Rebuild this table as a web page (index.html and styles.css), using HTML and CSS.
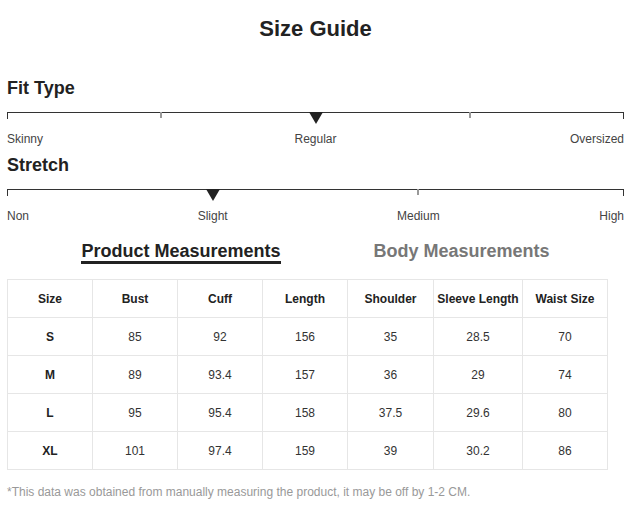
FILE: index.html
```html
<!DOCTYPE html>
<html lang="en">
<head>
<meta charset="utf-8">
<title>Size Guide</title>
<link rel="stylesheet" href="styles.css">
</head>
<body>
<div class="page">
  <h1 class="title">Size Guide</h1>

  <section class="scale">
    <h2 class="scale-title">Fit Type</h2>
    <div class="track">
      <span class="tick" style="left:25%"></span>
      <span class="pointer" style="left:50%"></span>
      <span class="tick" style="left:75%"></span>
    </div>
    <div class="labels labels-4">
      <span class="lab-start">Skinny</span>
      <span class="lab-mid2">Regular</span>
      <span class="lab-end">Oversized</span>
    </div>
  </section>

  <section class="scale scale-next">
    <h2 class="scale-title">Stretch</h2>
    <div class="track">
      <span class="pointer" style="left:33.333%"></span>
      <span class="tick" style="left:66.667%"></span>
    </div>
    <div class="labels labels-6">
      <span class="lab-start">Non</span>
      <span class="lab-a">Slight</span>
      <span class="lab-b">Medium</span>
      <span class="lab-end6">High</span>
    </div>
  </section>

  <div class="tabs">
    <span class="tab tab-active">Product Measurements</span>
    <span class="tab">Body Measurements</span>
  </div>

  <table class="sizes">
    <colgroup>
      <col style="width:85px"><col style="width:85px"><col style="width:85px"><col style="width:85px"><col style="width:86px"><col style="width:89px"><col style="width:85px">
    </colgroup>
    <thead>
      <tr><th>Size</th><th>Bust</th><th>Cuff</th><th>Length</th><th>Shoulder</th><th>Sleeve Length</th><th>Waist Size</th></tr>
    </thead>
    <tbody>
      <tr><th>S</th><td>85</td><td>92</td><td>156</td><td>35</td><td>28.5</td><td>70</td></tr>
      <tr><th>M</th><td>89</td><td>93.4</td><td>157</td><td>36</td><td>29</td><td>74</td></tr>
      <tr><th>L</th><td>95</td><td>95.4</td><td>158</td><td>37.5</td><td>29.6</td><td>80</td></tr>
      <tr><th>XL</th><td>101</td><td>97.4</td><td>159</td><td>39</td><td>30.2</td><td>86</td></tr>
    </tbody>
  </table>

  <p class="note">*This data was obtained from manually measuring the product, it may be off by 1-2 CM.</p>
</div>
</body>
</html>
```
FILE: styles.css
```css
* { box-sizing: border-box; }
html, body { margin: 0; padding: 0; background: #fff; }
body {
  font-family: "Liberation Sans", Arial, sans-serif;
  color: #222;
}
.page {
  width: 632px;
  padding: 16px 8px 0 7px;
}
.title {
  margin: 0;
  font-size: 22px;
  line-height: 26px;
  font-weight: bold;
  text-align: center;
  color: #222;
}
.scale { margin-top: 35px; }
.scale-next { margin-top: 8px; }
.scale-title {
  margin: 0 0 13px;
  font-size: 18px;
  line-height: 22px;
  font-weight: bold;
  color: #222;
}
.track {
  position: relative;
  height: 20px;
  border-top: 1px solid #333;
}
.track::before,
.track::after {
  content: "";
  position: absolute;
  top: -1px;
  width: 1px;
  height: 7px;
  background: #333;
}
.track::before { left: 0; }
.track::after { right: 0; }
.tick {
  position: absolute;
  top: -1px;
  width: 2px;
  height: 6px;
  margin-left: -1px;
  background: #999;
}
.pointer {
  position: absolute;
  top: -1px;
  width: 0;
  height: 0;
  margin-left: -7px;
  border-left: 7px solid transparent;
  border-right: 7px solid transparent;
  border-top: 12px solid #222;
}
.labels {
  display: grid;
  font-size: 12px;
  line-height: 14px;
  color: #444;
}
.labels-4 { grid-template-columns: repeat(4, 1fr); }
.labels-6 { grid-template-columns: repeat(6, 1fr); }
.lab-start { grid-column: 1; justify-self: start; }
.lab-mid2 { grid-column: 2 / 4; justify-self: center; }
.lab-end { grid-column: 4; justify-self: end; }
.lab-a { grid-column: 2 / 4; justify-self: center; }
.lab-b { grid-column: 4 / 6; justify-self: center; }
.lab-end6 { grid-column: 6; justify-self: end; }

.tabs {
  margin-top: 18px;
  display: flex;
  justify-content: center;
  gap: 93px;
}
.tab {
  font-size: 18px;
  line-height: 20px;
  font-weight: bold;
  color: #777;
  border-bottom: 3px solid transparent;
}
.tab-active {
  color: #222;
  border-bottom-color: #222;
}

.sizes {
  margin-top: 15px;
  width: 600px;
  table-layout: fixed;
  border-collapse: collapse;
  font-size: 12px;
  text-align: center;
}
.sizes tr { height: 38px; }
.sizes th,
.sizes td {
  border: 1px solid #e6e6e6;
  padding: 0 2px;
  vertical-align: middle;
}
.sizes th { font-weight: bold; color: #222; }
.sizes td { font-weight: normal; color: #333; }

.note {
  margin: 15px 0 0;
  font-size: 12px;
  line-height: 14px;
  color: #999;
}
```
